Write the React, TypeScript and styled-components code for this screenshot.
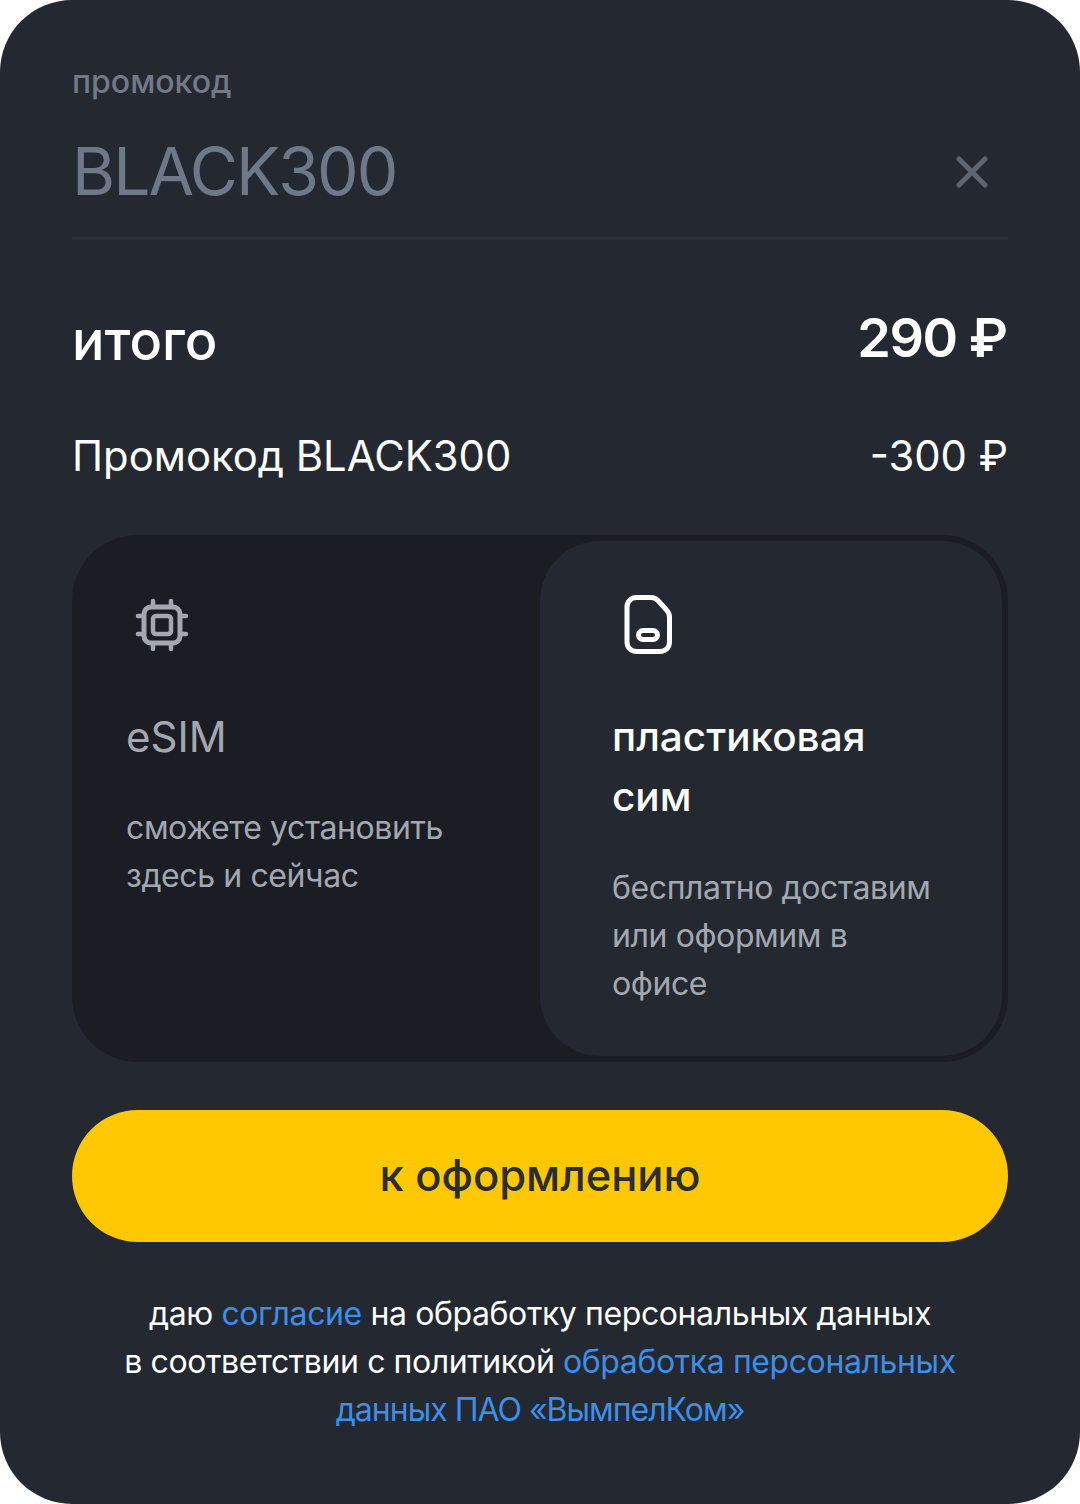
import React from "react";
import styled, { createGlobalStyle } from "styled-components";

const Global = createGlobalStyle`
  html, body { margin: 0; padding: 0; background: #fff; }
  * { box-sizing: border-box; }
  body { font-family: Inter, "Noto Sans", sans-serif; }
`;

const Sheet = styled.div`
  width: 1080px;
  height: 1504px;
  background: #232831;
  border-radius: 72px;
  padding: 59px 72px 0;
  display: flex;
  flex-direction: column;
`;
const FieldLabel = styled.div`
  font-size: 32px;
  line-height: 46px;
  font-weight: 500;
  color: #737a86;
`;
const Field = styled.div`
  height: 135px;
  margin-bottom: 65px;
  padding-top: 24px;
  display: flex;
  align-items: flex-start;
  justify-content: space-between;
  border-bottom: 3px solid #2b303a;
`;
const FieldValue = styled.div`
  font-size: 66px;
  line-height: 84px;
  color: #6f7886;
  letter-spacing: -2px;
`;
const ClearIcon = styled.svg`
  width: 48px;
  height: 48px;
  margin: 19px 12px 0 0;
`;
const TotalRow = styled.div`
  height: 86px;
  display: flex;
  justify-content: space-between;
  align-items: flex-start;
  color: #fff;
`;
const PromoRow = styled.div`
  height: 118px;
  margin-top: 6px;
  display: flex;
  justify-content: space-between;
  align-items: center;
  color: #fff;
`;
const TotalLabel = styled.span`
  margin-top: 3px;
  font-size: 54px;
  font-weight: 500;
`;
const TotalValue = styled.span`
  font-size: 54px;
  font-weight: 600;
  letter-spacing: -1.5px;
  margin-right: 1.5px;
`;
const PromoText = styled.span`
  font-size: 41.8px;
`;
const Segment = styled.div`
  height: 527px;
  margin-top: 20px;
  border-radius: 66px;
  background: #1a1d24;
  padding: 6px;
  display: grid;
  grid-template-columns: 462px 462px;
`;
const Option = styled.div<{ $active?: boolean }>`
  border-radius: 60px;
  background: ${(p) => (p.$active ? "#232831" : "transparent")};
  padding: ${(p) => (p.$active ? "48px 60px 0 72px" : "48px 40px 0 48px")};
`;
const IconBox = styled.svg`
  display: block;
  width: 72px;
  height: 72px;
`;
const OptionTitle = styled.div<{ $active?: boolean }>`
  margin-top: 46px;
  font-size: ${(p) => (p.$active ? "40.5px" : "42px")};
  line-height: 60px;
  font-weight: ${(p) => (p.$active ? 450 : 400)};
  color: ${(p) => (p.$active ? "#fff" : "#a3a8b0")};
`;
const OptionNote = styled.div`
  margin-top: 37px;
  font-size: 32px;
  line-height: 48px;
  letter-spacing: -0.4px;
  color: #a3a8b0;
`;
const Cta = styled.button`
  height: 132px;
  margin-top: 48px;
  width: 100%;
  border: 0;
  border-radius: 66px;
  padding: 0 0 3px;
  background: #ffc800;
  color: #2a2d33;
  font-family: inherit;
  font-size: 43.5px;
  font-weight: 500;
`;
const Legal = styled.div`
  margin-top: 48px;
  font-size: 32px;
  line-height: 48px;
  letter-spacing: -0.4px;
  text-align: center;
  color: #fff;
`;
const LegalLink = styled.span<{ $tight?: boolean }>`
  color: #3d8fe8;
  letter-spacing: ${(p) => (p.$tight ? "-1px" : "inherit")};
`;

function ClearField() {
  return (
    <Field>
      <FieldValue>BLACK300</FieldValue>
      <ClearIcon viewBox="0 0 48 48" fill="none" stroke="#5f6570" strokeWidth="5" strokeLinecap="round">
        <path d="M11 11l26 26M37 11L11 37" />
      </ClearIcon>
    </Field>
  );
}

export default function App() {
  return (
    <>
      <Global />
      <Sheet>
        <FieldLabel>промокод</FieldLabel>
        <ClearField />
        <TotalRow>
          <TotalLabel>итого</TotalLabel>
          <TotalValue>290 ₽</TotalValue>
        </TotalRow>
        <PromoRow>
          <PromoText>Промокод BLACK300</PromoText>
          <PromoText>-300 ₽</PromoText>
        </PromoRow>
        <Segment>
          <Option>
            <IconBox viewBox="0 0 72 72" fill="none" stroke="#a3a8b0" strokeWidth="5" strokeLinecap="round">
              <rect x="18" y="18" width="36" height="36" rx="7" />
              <rect x="27" y="27" width="18" height="18" rx="3" strokeWidth="4.5" />
              <path strokeWidth="4.5" d="M27 12v5M45 12v5M27 55v5M45 55v5M12 27h5M12 45h5M55 27h5M55 45h5" />
            </IconBox>
            <OptionTitle>eSIM</OptionTitle>
            <OptionNote>сможете установить здесь и сейчас</OptionNote>
          </Option>
          <Option $active>
            <IconBox viewBox="0 0 72 72" fill="none" stroke="#fff" strokeWidth="5">
              <path d="M24.500 8.500h14.500c3 0 5 1 7 3l8.500 9.500c2 2 3 4 3 7v25c0 5.500-4 9.500-9.500 9.500H24.500c-5.500 0-9.500-4-9.500-9.500V18c0-5.500 4-9.500 9.500-9.500z" />
              <rect x="26.500" y="41.500" width="19" height="9" rx="4.500" />
            </IconBox>
            <OptionTitle $active>пластиковая сим</OptionTitle>
            <OptionNote>бесплатно доставим или оформим в офисе</OptionNote>
          </Option>
        </Segment>
        <Cta>к оформлению</Cta>
        <Legal>
          даю <LegalLink>согласие</LegalLink> на обработку персональных данных
          <br />в соответствии с политикой <LegalLink>обработка персональных</LegalLink>
          <br />
          <LegalLink $tight>данных ПАО «ВымпелКом»</LegalLink>
        </Legal>
      </Sheet>
    </>
  );
}
